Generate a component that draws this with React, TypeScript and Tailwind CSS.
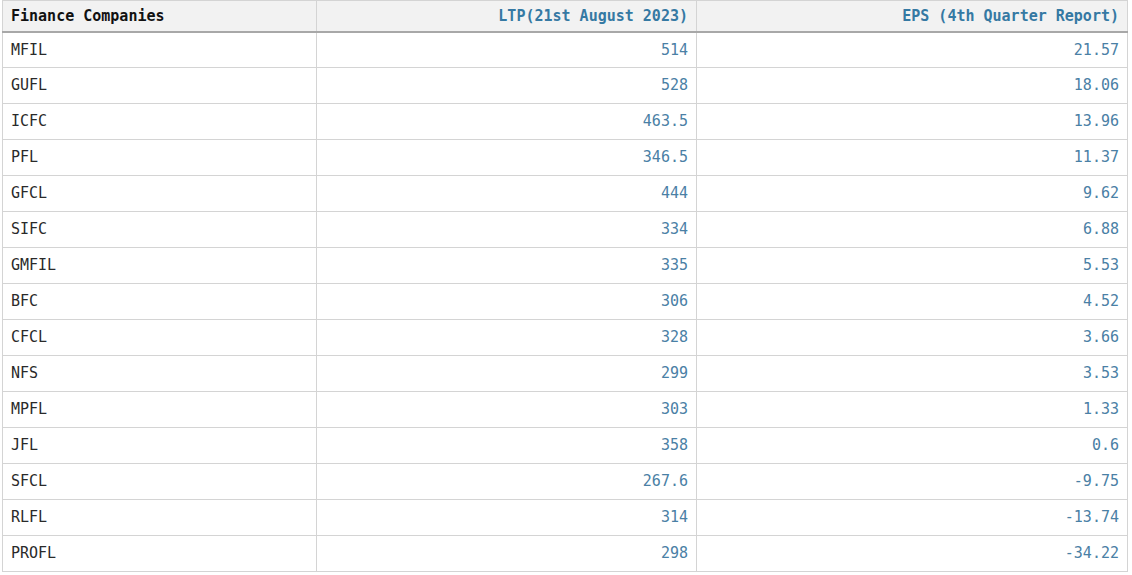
import React from "react";

const rows: [string, string, string][] = [
  ["MFIL", "514", "21.57"],
  ["GUFL", "528", "18.06"],
  ["ICFC", "463.5", "13.96"],
  ["PFL", "346.5", "11.37"],
  ["GFCL", "444", "9.62"],
  ["SIFC", "334", "6.88"],
  ["GMFIL", "335", "5.53"],
  ["BFC", "306", "4.52"],
  ["CFCL", "328", "3.66"],
  ["NFS", "299", "3.53"],
  ["MPFL", "303", "1.33"],
  ["JFL", "358", "0.6"],
  ["SFCL", "267.6", "-9.75"],
  ["RLFL", "314", "-13.74"],
  ["PROFL", "298", "-34.22"],
];

export default function App() {
  return (
    <div className="bg-white w-[1132px] h-[575px] pl-[2px] pr-[4px] font-['DejaVu_Sans_Mono',monospace] text-[15px]">
      <table className="w-[1126px] border-collapse border border-[#d4d4d4] table-fixed">
        <colgroup>
          <col className="w-[314px]" />
          <col className="w-[380px]" />
          <col />
        </colgroup>
        <thead>
          <tr className="h-[31px] bg-[#f2f2f2]">
            <th className="text-left font-bold text-[#111] px-2 border-r border-[#d4d4d4] border-b-2 border-b-[#a8a8a8]">Finance Companies</th>
            <th className="text-right font-bold text-[#3579a3] px-2 border-r border-[#d4d4d4] border-b-2 border-b-[#a8a8a8]">LTP(21st August 2023)</th>
            <th className="text-right font-bold text-[#3579a3] px-2 border-b-2 border-b-[#a8a8a8]">EPS (4th Quarter Report)</th>
          </tr>
        </thead>
        <tbody>
          {rows.map(([n, l, e]) => (
            <tr key={n} className="h-[36px] border-b border-[#d4d4d4]">
              <td className="px-2 text-[#2a2a2a] border-r border-[#d4d4d4]">{n}</td>
              <td className="px-2 text-right text-[#4a80a5] border-r border-[#d4d4d4]">{l}</td>
              <td className="px-2 text-right text-[#4a80a5]">{e}</td>
            </tr>
          ))}
        </tbody>
      </table>
    </div>
  );
}
